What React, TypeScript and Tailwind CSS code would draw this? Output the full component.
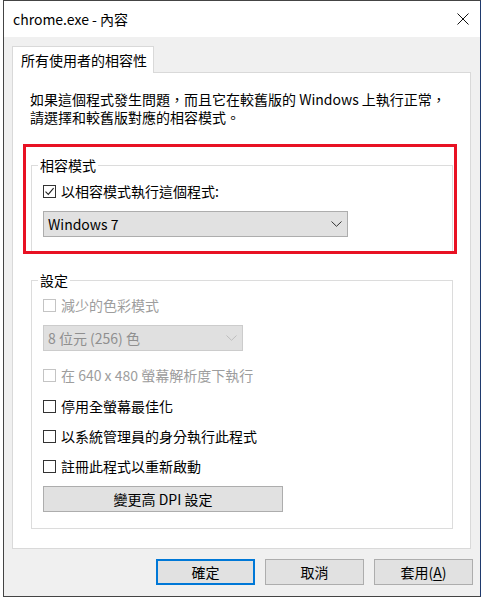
import type { ReactNode } from 'react'

function CheckBox({ checked, disabled }: { checked?: boolean; disabled?: boolean }) {
  return (
    <span
      className={`flex h-[13px] w-[13px] shrink-0 items-center justify-center border bg-white ${
        disabled ? 'border-[#c4c4c4]' : 'border-[#333333]'
      }`}
    >
      {checked && (
        <svg width="11" height="11" viewBox="0 0 11 11" fill="none">
          <path d="M1.5 5.6 L4.3 8.4 L9.6 2.2" stroke="#222" strokeWidth="1.1" />
        </svg>
      )}
    </span>
  )
}

function CheckRow({ label, checked, disabled, className = '' }: { label: string; checked?: boolean; disabled?: boolean; className?: string }) {
  return (
    <div className={`flex h-[18px] items-center gap-[5px] leading-[18px] ${disabled ? 'text-[#9d9d9d]' : 'text-black'} ${className}`}>
      <CheckBox checked={checked} disabled={disabled} />
      <span>{label}</span>
    </div>
  )
}

function Chevron({ color }: { color: string }) {
  return (
    <svg width="11" height="6" viewBox="0 0 11 6" fill="none">
      <path d="M0.5 0.5 L5.5 5.3 L10.5 0.5" stroke={color} strokeWidth="1" />
    </svg>
  )
}

function Select({ value, disabled, className = '' }: { value: string; disabled?: boolean; className?: string }) {
  return (
    <div
      className={`flex h-[26px] items-center justify-between border pl-[4px] pr-[5px] leading-[18px] ${
        disabled ? 'border-[#cccccc] bg-[#e0e0e0] text-[#8f8f8f]' : 'border-[#adadad] bg-[#e1e1e1] text-black'
      } ${className}`}
    >
      <span>{value}</span>
      <Chevron color={disabled ? '#bdbdbd' : '#333'} />
    </div>
  )
}

function Group({ title, children, className = '' }: { title: string; children: ReactNode; className?: string }) {
  return (
    <fieldset className={`w-[422px] border border-[#dcdcdc] ${className}`}>
      <legend className="ml-[6px] px-[2px] leading-[18px]">{title}</legend>
      <div className="pl-[11px]">{children}</div>
    </fieldset>
  )
}

function Button({ children, primary, className = '' }: { children: ReactNode; primary?: boolean; className?: string }) {
  return (
    <div
      className={`flex h-[26px] items-center justify-center bg-[#e1e1e1] leading-[18px] ${
        primary ? 'border-2 border-[#0078d7]' : 'border border-[#adadad]'
      } ${className}`}
    >
      {children}
    </div>
  )
}

export default function App() {
  return (
    <div className="h-[600px] w-[485px] bg-white pl-[3px] font-['Noto_Sans_CJK_TC','Noto_Sans',sans-serif] text-[14px] text-black">
      <div className="flex h-[597px] w-[478px] flex-col border border-[#444444] border-r-[#1f3a6e] bg-[#f0f0f0]">
        {/* title bar */}
        <div className="flex h-[36px] items-center justify-between bg-white pl-[9px] pr-[11px]">
          <span className="leading-[18px]">chrome.exe - 內容</span>
          <svg width="12" height="12" viewBox="0 0 12 12" fill="none">
            <path d="M0.5 0.5 L11.5 11.5 M11.5 0.5 L0.5 11.5" stroke="#111" strokeWidth="1" />
          </svg>
        </div>

        <div className="pt-[9px]">
          <div className="relative z-10 -mb-px ml-[8px] flex h-[27px] w-[142px] items-center border border-b-0 border-[#d9d9d9] bg-white pl-[8px] leading-[18px]">
            所有使用者的相容性
          </div>
          <div className="ml-[8px] w-[459px] border border-[#d9d9d9] bg-white pb-[19px] pt-[17px]">
            <p className="pl-[17px] leading-[18px]">
              如果這個程式發生問題，而且它在較舊版的 Windows 上執行正常，
              <br />
              請選擇和較舊版對應的相容模式。
            </p>

            <div className="relative ml-[18px] mt-[30px] w-[422px]">
              <Group title="相容模式" className="pb-[14px]">
                <CheckRow label="以相容模式執行這個程式:" checked className="mt-[8px]" />
                <Select value="Windows 7" className="mt-[11px] w-[305px]" />
              </Group>
              <div className="pointer-events-none absolute -bottom-[2px] -left-[8px] -top-[12px] -right-[4px] border-[3px] border-[#e81123]" />
            </div>

            <Group title="設定" className="ml-[18px] mt-[19px] pb-[16px]">
              <CheckRow label="減少的色彩模式" disabled className="mt-[7px]" />
              <Select value="8 位元 (256) 色" disabled className="mt-[11px] w-[200px]" />
              <CheckRow label="在 640 x 480 螢幕解析度下執行" disabled className="mt-[15px]" />
              <CheckRow label="停用全螢幕最佳化" className="mt-[13px]" />
              <CheckRow label="以系統管理員的身分執行此程式" className="mt-[12px]" />
              <CheckRow label="註冊此程式以重新啟動" className="mt-[12px]" />
              <Button className="mt-[11px] w-[240px]">變更高 DPI 設定</Button>
            </Group>
          </div>

          <div className="mt-[10px] flex justify-end gap-[10px] pr-[7px]">
            <Button primary className="w-[99px]">確定</Button>
            <Button className="w-[99px]">取消</Button>
            <Button className="w-[99px]">
              套用(<span className="underline underline-offset-2">A</span>)
            </Button>
          </div>
        </div>
      </div>
    </div>
  )
}
